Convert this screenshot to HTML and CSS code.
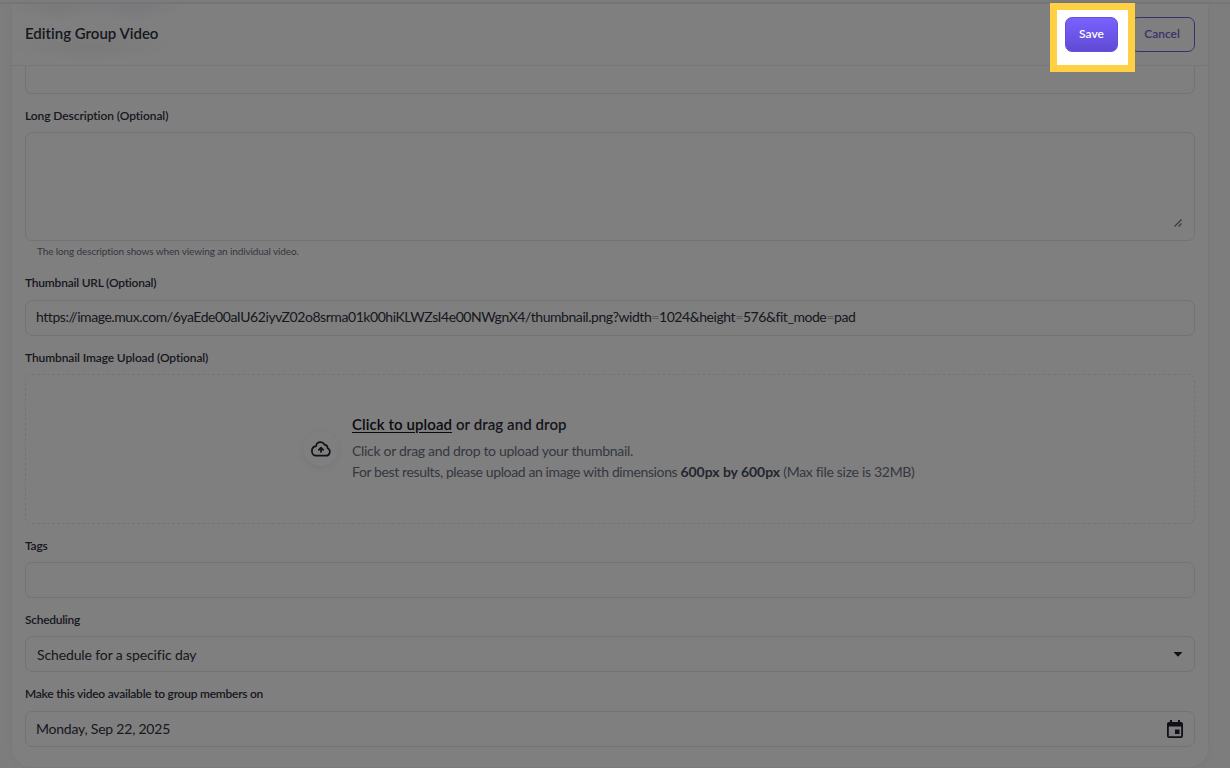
FILE: index.html
```html
<!DOCTYPE html>
<html lang="en">
<head>
    <meta charset="UTF-8">
    <meta name="viewport" content="width=device-width, initial-scale=1.0">
    <title>Editing Group Video</title>
    <link rel="stylesheet" href="styles.css">
</head>
<body>
    <div class="topline"></div>
    <main class="card">
        <header class="card-header">
            <h1><span class="t-title">Editing Group Video</span></h1>
            <div class="actions">
                <button class="btn btn-save">Save</button>
                <button class="btn btn-cancel">Cancel</button>
            </div>
        </header>
        <form class="form">
            <div class="input input-cut"></div>

            <label class="label label-first"><span class="t-long">Long Description (Optional)</span></label>
            <div class="textarea">
                <svg class="grip" width="8" height="8" viewBox="0 0 8 8"><path d="M.5 7.500l7-7M4.500 7.500l3-3"/></svg>
            </div>
            <p class="help"><span class="t-help">The long description shows when viewing an individual video.</span></p>

            <label class="label"><span class="t-url">Thumbnail URL (Optional)</span></label>
            <div class="input input-url"><span class="t-link">https://image.mux.com/6yaEde00aIU62iyvZ02o8srma01k00hiKLWZsI4e00NWgnX4/thumbnail.png?width<i>=</i>1024&amp;height<i>=</i>576&amp;fit_mode<i>=</i>pad</span></div>

            <label class="label label-low"><span class="t-upload">Thumbnail Image Upload (Optional)</span></label>
            <div class="dropzone">
                <div class="upload-icon">
                    <svg width="20" height="16" viewBox="0 0 20 16"><path d="M5 14.700h9.800a4.100 4.100 0 0 0 1.700-7.800C16.600 5.200 15.500 4 13.700 3.800 12.700 2.100 11.500 1.200 9.600 1.200c-2.500 0-4.300 1.600-4.500 4C2.500 5.500.9 7.500.9 10c0 2.700 1.700 4.700 4.100 4.700z"/><path d="M10 11V7.200M7.800 8.800 10 6.700l2.200 2.100"/></svg>
                </div>
                <div class="upload-text">
                    <p class="upload-title"><span class="t-click"><u>Click to upload</u> or drag and drop</span></p>
                    <p><span class="t-drag">Click or drag and drop to upload your thumbnail.</span></p>
                    <p><span class="t-best">For best results, please upload an image with dimensions <b>600px by 600px</b> <span class="t-max">(Max file size is 32MB)</span></span></p>
                </div>
            </div>

            <label class="label label-low"><span class="t-tags">Tags</span></label>
            <div class="input"></div>

            <label class="label label-low"><span class="t-sched">Scheduling</span></label>
            <div class="input select">
                <span class="t-select">Schedule for a specific day</span>
                <svg width="10" height="5" viewBox="0 0 10 5"><path d="M.5 0h9L5 4.800z"/></svg>
            </div>

            <label class="label label-date"><span class="t-make">Make this video available to group members on</span></label>
            <div class="input date">
                <span class="t-date">Monday, Sep 22, 2025</span>
                <svg width="16" height="18" viewBox="0 0 16 18"><path fill-rule="evenodd" d="M3 0h2v2h6V0h2v2h1a2 2 0 0 1 2 2v12a2 2 0 0 1-2 2H2a2 2 0 0 1-2-2V4a2 2 0 0 1 2-2h1zM1.800 6.500v9.700h12.400V6.500zM8 9.500h4.500V14H8z"/></svg>
            </div>
        </form>
    </main>
    <div class="spotlight"></div>
</body>
</html>
```
FILE: styles.css
```css
* {
    box-sizing: border-box;
}
body {
    margin: 0;
    height: 768px;
    overflow: hidden;
    position: relative;
    background: #fafafa;
    color: #303040;
    font-family: Lato, "Liberation Sans", sans-serif;
    font-variant-ligatures: none;
}
h1, p {
    margin: 0;
}
span {
    white-space: nowrap;
}
.topline {
    height: 4px;
    border-bottom: 2px solid #ececee;
}
.card {
    width: 1198px;
    height: 764px;
    margin-left: 11px;
    background: #fff;
    border: 1px solid #f3f3f4;
    border-top: 0;
    border-radius: 0 0 20px 20px;
    box-shadow: 0 0 8px rgba(0,0,0,0.03);
}
.card-header {
    height: 62px;
    padding: 0 13px;
    display: flex;
    justify-content: space-between;
    align-items: center;
    border-bottom: 1px solid #ececee;
    /* soft traces of the content scrolled under the header */
    background:
        radial-gradient(ellipse 50px 14px at 46px 3px, rgba(40,40,60,0.06), transparent),
        radial-gradient(ellipse 50px 14px at 122px 3px, rgba(90,80,220,0.08), transparent),
        radial-gradient(ellipse 90px 16px at 78px 42px, rgba(40,40,60,0.05), transparent),
        #fff;
}
.card-header h1 {
    padding-bottom: 3px;
    font-size: 15px;
    font-weight: 600;
}
.actions {
    display: flex;
    gap: 13px;
}
.btn {
    height: 35px;
    border-radius: 7px;
    font-family: inherit;
    font-size: 12px;
    font-weight: 600;
    padding: 0 0 2px;
}
.btn-save {
    width: 53px;
    color: #fff;
    border: 1px solid #6450df;
    background: linear-gradient(#7961ff, #604bd3);
}
.btn-cancel {
    width: 64px;
    padding-right: 2px;
    color: #7364d4;
    border: 1px solid #7364d4;
    background: #fff;
}
.form {
    padding: 0 13px;
}
.label {
    display: block;
    height: 38px;
    padding-top: 4px;
    line-height: 34px;
    font-size: 12px;
    font-weight: 600;
}
.label-first,
.label-low {
    padding-top: 5px;
}
.label-date {
    height: 39px;
    padding-top: 5px;
}
.input {
    height: 36px;
    padding: 0 10px;
    display: flex;
    align-items: center;
    border: 1px solid #e6e6e9;
    border-radius: 7px;
    font-size: 14px;
}
.input i {
    font-style: normal;
    color: #b4b4bc;
}
.input-cut {
    height: 28px;
    border-top: 0;
    border-radius: 0 0 7px 7px;
}
.input-url {
    padding-bottom: 3px;
}
.textarea {
    height: 109px;
    padding: 13px 12px;
    display: flex;
    justify-content: flex-end;
    align-items: flex-end;
    border: 1px solid #e6e6e9;
    border-radius: 7px;
}
.grip path {
    fill: none;
    stroke: #777;
    stroke-width: 1.3;
}
.help {
    height: 21px;
    padding-left: 12px;
    line-height: 21px;
    font-size: 10px;
    color: #6a7080;
}
.dropzone {
    height: 150px;
    padding: 0 2px 3px 0;
    display: flex;
    justify-content: center;
    align-items: center;
    gap: 14px;
    border: 1px dashed #e8e8ea;
    border-radius: 7px;
}
.upload-icon {
    width: 35px;
    height: 35px;
    margin-top: 2px;
    display: flex;
    justify-content: center;
    align-items: center;
    border-radius: 50%;
    box-shadow: 0 2px 8px rgba(0,0,0,0.08);
}
.upload-icon path {
    fill: none;
    stroke: #20202e;
    stroke-width: 1.7;
    stroke-linejoin: round;
    stroke-linecap: round;
}
.upload-text {
    width: 563px;
    font-size: 14px;
    line-height: 21px;
    color: #6a7080;
}
.upload-title {
    height: 26px;
    font-size: 15px;
    font-weight: 600;
    color: #2c2c3a;
}
.upload-title u {
    color: #14141f;
    text-decoration-thickness: 1px;
    text-underline-offset: 2px;
}
.upload-text b {
    color: #474c5e;
    letter-spacing: -0.05px;
}
.select {
    justify-content: space-between;
    padding: 0 11px;
}
.date {
    justify-content: space-between;
    padding: 0 11px 1px 10px;
}
.input path {
    fill: #20202e;
}

/* text tracking */
.t-upload,
.t-select {
    letter-spacing: -0.12px;
}
.t-long {
    letter-spacing: -0.08px;
}
.t-help {
    letter-spacing: -0.12px;
}
.t-url,
.t-date,
.t-tags {
    letter-spacing: -0.22px;
}
.t-make {
    letter-spacing: -0.25px;
}
.t-sched {
    letter-spacing: -0.28px;
}
.t-link {
    letter-spacing: -0.44px;
}
.t-drag {
    letter-spacing: -0.31px;
}
.t-best {
    letter-spacing: -0.38px;
}
.t-max {
    letter-spacing: -0.3px;
}
.t-click {
    letter-spacing: 0.08px;
}
.spotlight {
    position: absolute;
    left: 1050px;
    top: 3px;
    width: 85px;
    height: 69px;
    border: 7px solid #ffd044;
    box-shadow: 0 0 0 2000px rgba(0,0,0,0.5);
}
```
